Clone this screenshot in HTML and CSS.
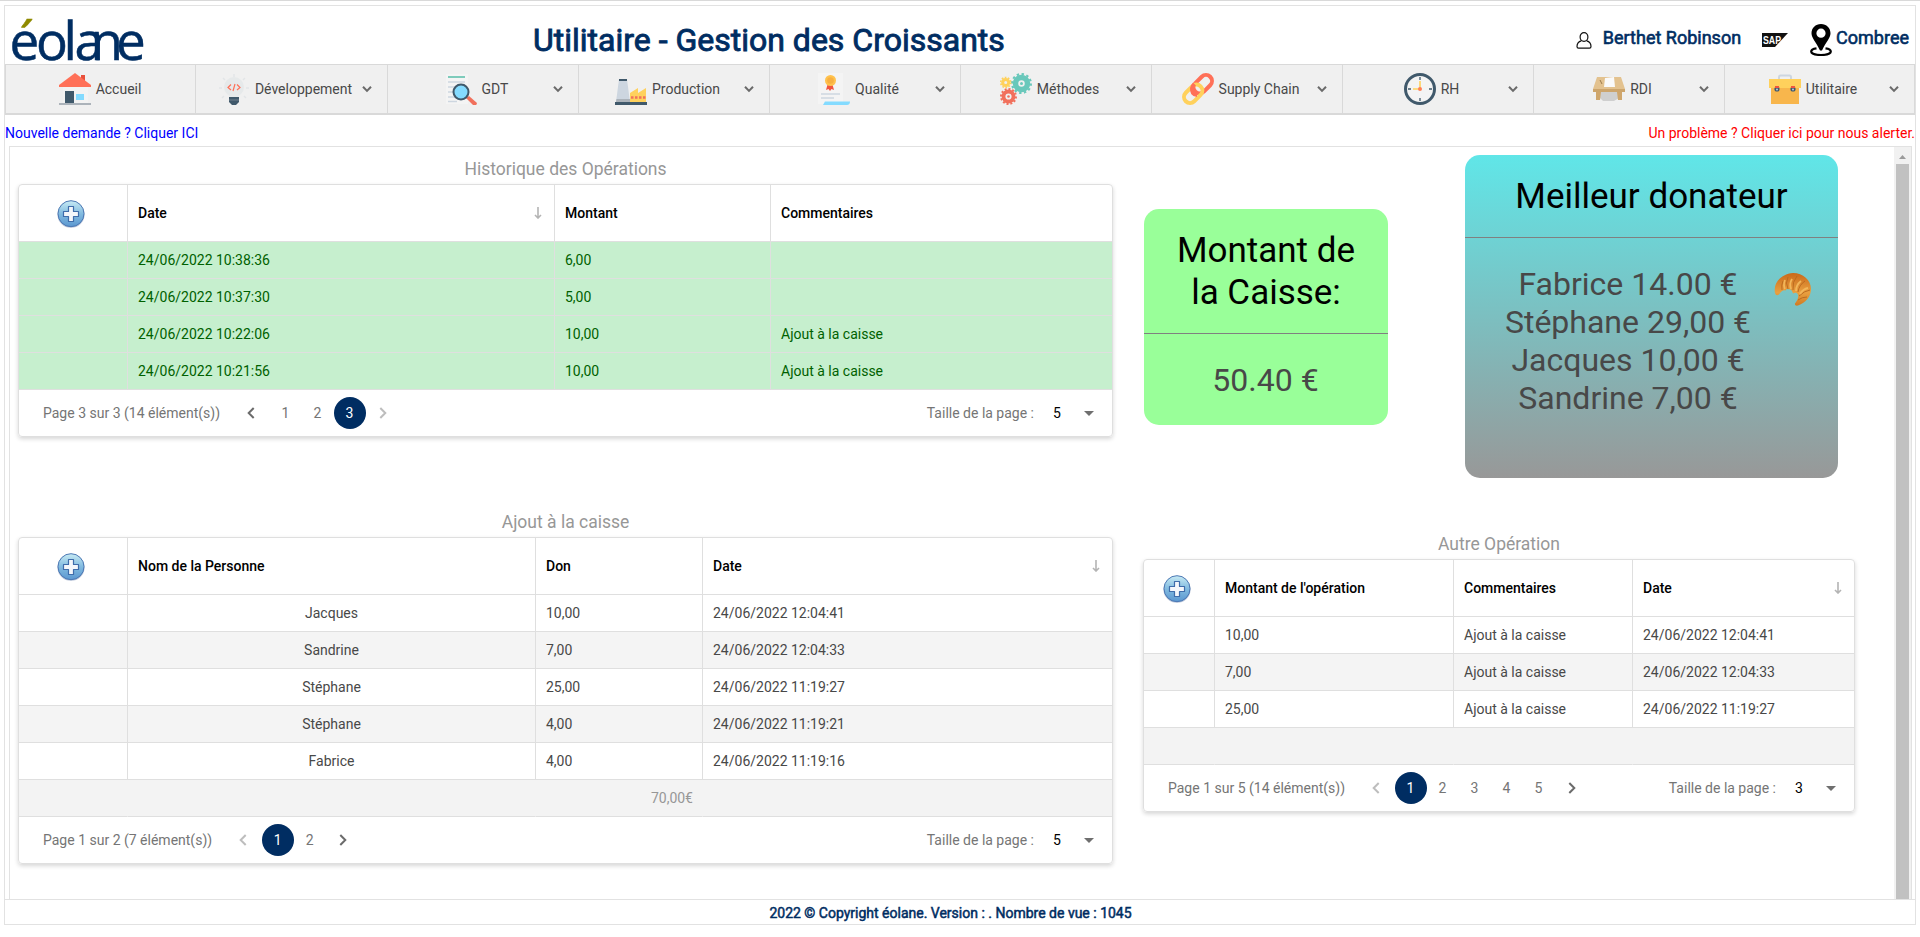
FILE: index.html
```html
<!DOCTYPE html>
<html lang="fr">
<head>
<meta charset="utf-8">
<title>Utilitaire - Gestion des Croissants</title>
<link rel="stylesheet" href="styles.css">
</head>
<body>
<svg width="0" height="0" class="defs">
  <defs>
    <linearGradient id="ball" x1="0" y1="0" x2="0" y2="1"><stop offset="0" stop-color="#c8ebf4"/><stop offset=".5" stop-color="#82bbe0"/><stop offset="1" stop-color="#5b97d0"/></linearGradient>
    <pattern id="brand" patternUnits="userSpaceOnUse" x="-4" y="-10" width="160" height="70"><path d="M0 0h160v70H0z" fill="#002d62"/><path d="M0 0h32v23H0z" fill="#8f8a00"/></pattern>
    <linearGradient id="crust" x1="0" y1="0" x2="0" y2="1"><stop offset="0" stop-color="#c9691a"/><stop offset=".6" stop-color="#e9a040"/><stop offset="1" stop-color="#d07a22"/></linearGradient>
    <symbol id="add" viewBox="0 0 28 28">
      <ellipse cx="14" cy="14.6" rx="13.6" ry="13.2" fill="#b9c4d8"/>
      <circle cx="14" cy="13.7" r="13" fill="url(#ball)" stroke="#4c78b4" stroke-width="1"/>
      <path d="M11.5 6.5h5v5h5v5h-5v5h-5v-5h-5v-5h5z" fill="#f4f7fb" stroke="#3f6dab" stroke-width="1.2" stroke-linejoin="round"/>
    </symbol>
    <symbol id="down" viewBox="0 0 10 8"><path d="M1 1.7 5 5.9 9 1.7" fill="none" stroke="#6a6a6a" stroke-width="2"/></symbol>
    <symbol id="sort" viewBox="0 0 8 12"><path d="M4 0V10M1 8l3 3 3-3" fill="none" stroke="#b4b4b4" stroke-width="1.6"/></symbol>
    <symbol id="prev" viewBox="0 0 8 12"><path d="M6.7 1 1.7 6l5 5" fill="none" stroke="currentColor" stroke-width="2"/></symbol>
    <symbol id="next" viewBox="0 0 8 12"><path d="M1.3 1l5 5-5 5" fill="none" stroke="currentColor" stroke-width="2"/></symbol>
    <symbol id="caret" viewBox="0 0 10 5"><path d="M0 0h10L5 5z" fill="#6f6f6f"/></symbol>
  </defs>
</svg>
<div class="page">
  <header class="top">
    <svg class="logo" width="140" height="48" viewBox="0 0 140 48"><text x="-2.600 24 51.500 62.500 78.500 104" y="45">éolane</text></svg>
    <h1 class="title">Utilitaire - Gestion des Croissants</h1>
    <div class="user">
      <svg class="i-user" width="16" height="17" viewBox="0 0 16 17" fill="none" stroke="#111" stroke-width="1.2"><ellipse cx="8" cy="5" rx="3.9" ry="4.4"/><path d="M5.3 8.8C2.5 9.500 1 11.500 1 14.500c0 1.200.5 1.700 1.500 1.700h11c1 0 1.500-.5 1.500-1.700 0-3-1.500-5-4.300-5.700"/></svg>
      <span class="user-name">Berthet Robinson</span>
      <svg class="i-sap" width="26" height="14" viewBox="0 0 26 14"><path d="M0 0h26L13 14H0z" fill="#111"/><text x="1" y="11" textLength="18" lengthAdjust="spacingAndGlyphs">SAP</text></svg>
      <svg class="i-pin" width="22" height="32" viewBox="0 0 22 32"><path d="M11 0C5.500 0 1.500 4 1.500 9.300 1.500 14 6 18 10 26.500h2C16 18 20.500 14 20.500 9.300 20.500 4 16.500 0 11 0zm0 4.600a4.600 4.600 0 1 1 0 9.200 4.600 4.600 0 0 1 0-9.200z" fill-rule="evenodd"/><path d="M6.500 24.300C3 24.800 1.200 26 1.200 27.500 1.200 29.500 5.500 31 11 31s9.800-1.500 9.800-3.500c0-1.500-1.800-2.700-5.300-3.200" fill="none" stroke="#000" stroke-width="2.200"/></svg>
      <span class="site">Combree</span>
    </div>
  </header>

  <nav class="menu">
    <a class="item home"><span class="entry"><svg width="32" height="32" viewBox="0 0 32 32"><path d="M4 12h25v18H4z" fill="#f3f3f3"/><path d="M22 2h4v8h-4z" fill="#e8503c"/><path d="M16 0 32 12v2H0v-2z" fill="#ff7058"/><path d="M6 18h9v12H6z" fill="#40596b"/><path d="M17 21h8v6h-8z" fill="#84dbff"/><path d="M0 30h32v2H0z" fill="#acb3ba"/></svg>Accueil</span></a>
    <a class="item"><span class="entry"><svg width="32" height="32" viewBox="0 0 32 32"><path d="M16 1v3M5 5l2 2M27 5l-2 2M1 15h3M31 15h-3M4 25l2-2M28 25l-2-2" stroke="#e2e5e7" stroke-width="1.500"/><circle cx="16" cy="14" r="10" fill="#e6e9ea"/><path d="M11.500 20h9v5h-9z" fill="#e6e9ea"/><path d="M13 11.500 10 14.500l3 2.500M19 11.500l3 3-3 2.500M17 11l-2 7" fill="none" stroke="#ff7058" stroke-width="1.200"/><path d="M11 24h10v5l-3 3h-4l-3-3z" fill="#40596b"/><path d="M11 27h10" stroke="#7d8b98" stroke-width=".8"/></svg>Développement</span><svg class="down"><use href="#down"/></svg></a>
    <a class="item"><span class="entry"><svg width="32" height="32" viewBox="0 0 32 32"><path d="M1 1h22v30H1z" fill="#f4f4f4"/><path d="M3 4h17" stroke="#7ecbbb" stroke-width="2"/><path d="M3 9h17M3 14h12M3 19h6M3 24h8M3 28.500h9" stroke="#cdd6e0" stroke-width="1.600"/><path d="m21 25 3-2 8 7q-1 4-4 2z" fill="#f1705c"/><circle cx="16" cy="19" r="7.500" fill="#84dbff" stroke="#40596b" stroke-width="2"/></svg>GDT</span><svg class="down"><use href="#down"/></svg></a>
    <a class="item"><span class="entry"><svg width="32" height="32" viewBox="0 0 32 32"><path d="M4 6h8l3 23H1z" fill="#cdd6e0"/><path d="M4 6h8v2H4z" fill="#40596b"/><path d="M1.500 26H15v3H1z" fill="#acb3ba"/><path d="M15 20l8-5v5l8-5v14H15z" fill="#ffd15c"/><path d="M16 24.500h15" stroke="#f1705c" stroke-width="2.500" stroke-dasharray="2.500 1.500"/><path d="M0 29h32v3H0z" fill="#40596b"/></svg>Production</span><svg class="down"><use href="#down"/></svg></a>
    <a class="item"><span class="entry"><svg width="32" height="32" viewBox="0 0 32 32"><path d="M0 0h25v31H0z" fill="#f4f4f4"/><path d="m10 10-2 7 2.500-1 1.500 2 1.500-2 2.500 1-2-7z" fill="#f1553f"/><circle cx="12.500" cy="7.500" r="5.500" fill="#ffc24d"/><circle cx="12.500" cy="7.500" r="3.300" fill="#f8b040"/><path d="M3 21h19M3 25h13" stroke="#cdd6e0" stroke-width="1.700"/><path d="M7 28.500h25c0 2-1 3.500-3 3.500H5z" fill="#84dbff"/></svg>Qualité</span><svg class="down"><use href="#down"/></svg></a>
    <a class="item"><span class="entry"><svg width="32" height="32" viewBox="0 0 32 32" fill="none"><circle cx="21.500" cy="10.500" r="6" stroke="#69c8bb" stroke-width="5.500"/><circle cx="21.500" cy="10.500" r="9.400" stroke="#69c8bb" stroke-width="2.200" stroke-dasharray="2.400 2.500"/><circle cx="21.500" cy="10.500" r="1.500" fill="#69c8bb"/><circle cx="8.500" cy="23.500" r="5" stroke="#f1705c" stroke-width="3.800"/><circle cx="8.500" cy="23.500" r="7.500" stroke="#f1705c" stroke-width="2" stroke-dasharray="2 1.900"/><circle cx="8.500" cy="23.500" r="1.300" fill="#f1705c"/><circle cx="5.700" cy="9.500" r="3" stroke="#ffd15c" stroke-width="3"/><circle cx="5.700" cy="9.500" r="5" stroke="#ffd15c" stroke-width="1.600" stroke-dasharray="1.700 1.440"/></svg>Méthodes</span><svg class="down"><use href="#down"/></svg></a>
    <a class="item"><span class="entry"><svg width="32" height="32" viewBox="0 0 32 32" fill="none" stroke-width="4"><rect x="-10.500" y="-6" width="21" height="12" rx="6" transform="translate(20.800 11.200) rotate(-45)" stroke="#ff7058"/><rect x="-10.500" y="-6" width="21" height="12" rx="6" transform="translate(11.200 20.800) rotate(-45)" stroke="#ffd15c"/><path d="M12.500 11q-4 4-1.500 9 1.500 2 4 2" stroke="#ff7058"/></svg>Supply Chain</span><svg class="down"><use href="#down"/></svg></a>
    <a class="item"><span class="entry"><svg width="32" height="32" viewBox="0 0 32 32"><circle cx="16" cy="16" r="14.500" fill="#f4f4f4" stroke="#40596b" stroke-width="3"/><path d="M16 4v3M16 25v3M4 16h3M25 16h3" stroke="#40596b" stroke-width="1.300"/><path d="M16 8v8H9" fill="none" stroke="#ffd15c" stroke-width="1.600"/><circle cx="16" cy="16" r="2" fill="#ff8058"/></svg>RH</span><svg class="down"><use href="#down"/></svg></a>
    <a class="item"><span class="entry"><svg width="32" height="32" viewBox="0 0 32 32"><path d="M7 17h19v8l-5 3H10l-4-4z" fill="#cfcfcf"/><path d="M4 4h24l4 12H0z" fill="#e3c28f"/><path d="M0 16h32v3H0z" fill="#cda56c"/><path d="M3 19h5L7 27H3zM24 19h5v8h-4z" fill="#cfa66c"/><path d="m12 5 9-1 1 10h-11z" fill="#fafafa"/><path d="m7 7 2 4" stroke="#9d7c4b"/></svg>RDI</span><svg class="down"><use href="#down"/></svg></a>
    <a class="item"><span class="entry"><svg width="32" height="32" viewBox="0 0 32 32"><path d="M10 6V4q0-1.500 1.500-1.500h9Q22 2.500 22 4v2" fill="none" stroke="#cdd6e0" stroke-width="2"/><path d="M2 15h28v16H2z" fill="#f8b64c"/><path d="M0 6h32v9H0z" fill="#ffd15c"/><circle cx="8" cy="16" r="2.600" fill="#40596b"/><circle cx="24" cy="16" r="2.600" fill="#40596b"/><path d="M6 13h4v2H6zM22 13h4v2h-4z" fill="#f1553f"/><circle cx="8" cy="16.500" r=".9" fill="#cdd6e0"/><circle cx="24" cy="16.500" r=".9" fill="#cdd6e0"/></svg>Utilitaire</span><svg class="down"><use href="#down"/></svg></a>
  </nav>

  <div class="links"><a class="ask">Nouvelle demande ? Cliquer ICI</a><a class="alert">Un problème ? Cliquer ici pour nous alerter.</a></div>

  <main class="frame">
    <div class="content">
      <section class="left">
        <h2 class="caption">Historique des Opérations</h2>
        <div class="grid history">
          <table>
            <colgroup><col class="w109"><col class="w427"><col class="w216"><col></colgroup>
            <thead><tr><th class="cmd"><svg class="add"><use href="#add"/></svg></th><th><div class="head">Date<svg class="sort"><use href="#sort"/></svg></div></th><th>Montant</th><th>Commentaires</th></tr></thead>
            <tbody>
              <tr><td></td><td>24/06/2022 10:38:36</td><td>6,00</td><td></td></tr>
              <tr><td></td><td>24/06/2022 10:37:30</td><td>5,00</td><td></td></tr>
              <tr><td></td><td>24/06/2022 10:22:06</td><td>10,00</td><td>Ajout à la caisse</td></tr>
              <tr><td></td><td>24/06/2022 10:21:56</td><td>10,00</td><td>Ajout à la caisse</td></tr>
            </tbody>
          </table>
          <div class="pager"><span class="info">Page 3 sur 3 (14 élément(s))</span><svg class="arrow"><use href="#prev"/></svg><span class="num">1</span><span class="num">2</span><span class="num on">3</span><svg class="arrow off"><use href="#next"/></svg><span class="size">Taille de la page :</span><span class="value">5</span><svg class="caret"><use href="#caret"/></svg></div>
        </div>
        <h2 class="caption second">Ajout à la caisse</h2>
        <div class="grid">
          <table>
            <colgroup><col class="w109"><col class="w408"><col class="w167"><col></colgroup>
            <thead><tr><th class="cmd"><svg class="add"><use href="#add"/></svg></th><th>Nom de la Personne</th><th>Don</th><th><div class="head">Date<svg class="sort"><use href="#sort"/></svg></div></th></tr></thead>
            <tbody>
              <tr><td></td><td class="mid">Jacques</td><td>10,00</td><td>24/06/2022 12:04:41</td></tr>
              <tr><td></td><td class="mid">Sandrine</td><td>7,00</td><td>24/06/2022 12:04:33</td></tr>
              <tr><td></td><td class="mid">Stéphane</td><td>25,00</td><td>24/06/2022 11:19:27</td></tr>
              <tr><td></td><td class="mid">Stéphane</td><td>4,00</td><td>24/06/2022 11:19:21</td></tr>
              <tr><td></td><td class="mid">Fabrice</td><td>4,00</td><td>24/06/2022 11:19:16</td></tr>
            </tbody>
            <tfoot><tr><td></td><td></td><td class="sum">70,00€</td><td></td></tr></tfoot>
          </table>
          <div class="pager"><span class="info">Page 1 sur 2 (7 élément(s))</span><svg class="arrow off"><use href="#prev"/></svg><span class="num on">1</span><span class="num">2</span><svg class="arrow"><use href="#next"/></svg><span class="size">Taille de la page :</span><span class="value">5</span><svg class="caret"><use href="#caret"/></svg></div>
        </div>
      </section>

      <section class="right">
        <div class="cards">
          <div class="card cash"><h3>Montant de<br>la Caisse:</h3><p>50.40 €</p></div>
          <div class="card best">
            <h3>Meilleur donateur</h3>
            <div class="donors">
              <p>Fabrice 14.00 €<br>Stéphane 29,00 €<br>Jacques 10,00 €<br>Sandrine 7,00 €</p>
              <svg class="croissant" width="37" height="33" viewBox="0 0 37 33"><path d="M1 20C-1 10 7 1 19 0c10 0 18 7 18 16 0 7-5 14-13 16.500-2 .5-3.500-.5-3-2 2-3 4-6 3-9-1-2-3-2-5-1-1-4-3-5-5-4-1-1-2 0-2 1-3-1-5 1-7 4q-3 2-4-1.500z" fill="url(#crust)"/><path d="M8 17Q7 12 9 8M14 16q-3-6 0-12M19 17q-1-8 4-14M24 19q1-7 7-11M25 23q5-5 11-6M24 27q4-3 9-3" fill="none" stroke="#b8681e" stroke-width=".9"/><path d="M11 16q-2-4 0-9M17 16q-2-5 1-10M22 18q0-6 5-10M26 21q3-5 8-6" fill="none" stroke="#f2b65a" stroke-width="1.800"/></svg>
            </div>
          </div>
        </div>
        <h2 class="caption third">Autre Opération</h2>
        <div class="grid">
          <table>
            <colgroup><col class="w71"><col class="w239"><col class="w179"><col></colgroup>
            <thead><tr><th class="cmd"><svg class="add"><use href="#add"/></svg></th><th>Montant de l'opération</th><th>Commentaires</th><th><div class="head">Date<svg class="sort"><use href="#sort"/></svg></div></th></tr></thead>
            <tbody>
              <tr><td></td><td>10,00</td><td>Ajout à la caisse</td><td>24/06/2022 12:04:41</td></tr>
              <tr><td></td><td>7,00</td><td>Ajout à la caisse</td><td>24/06/2022 12:04:33</td></tr>
              <tr><td></td><td>25,00</td><td>Ajout à la caisse</td><td>24/06/2022 11:19:27</td></tr>
            </tbody>
            <tfoot><tr><td></td><td></td><td></td><td></td></tr></tfoot>
          </table>
          <div class="pager"><span class="info">Page 1 sur 5 (14 élément(s))</span><svg class="arrow off"><use href="#prev"/></svg><span class="num on">1</span><span class="num">2</span><span class="num">3</span><span class="num">4</span><span class="num">5</span><svg class="arrow"><use href="#next"/></svg><span class="size">Taille de la page :</span><span class="value">3</span><svg class="caret"><use href="#caret"/></svg></div>
        </div>
      </section>
    </div>
    <div class="scroll"><svg width="7" height="4" viewBox="0 0 7 4"><path d="M3.500 0 7 4H0z" fill="#9b9b9b"/></svg><div class="thumb"></div></div>
  </main>
  <footer class="foot">2022 © Copyright éolane. Version : . Nombre de vue : 1045</footer>
</div>
</body>
</html>
```
FILE: styles.css
```css
* { box-sizing: border-box; }
body {
  margin: 0;
  height: 937px;
  overflow: hidden;
  border-top: 1px solid #d9d9d9;
  background: #fff;
  color: #484848;
  font: 14px/20px Roboto, sans-serif;
}
h1, h2, h3, p { margin: 0; font-weight: 400; }
svg { flex: none; display: block; }
.defs { position: absolute; }
.page {
  display: flex;
  flex-direction: column;
  width: 1912px;
  height: 920px;
  margin: 4px 0 0 4px;
  border: 1px solid #e2e2e2;
}

.top { display: flex; height: 58px; }
.logo { margin: 9px 0 0 7px; overflow: visible; }
.logo text { font: 53px "Open Sans", sans-serif; fill: url(#brand); stroke: url(#brand); stroke-width: .5px; }
.title {
  margin: 14px 0 0 381px;
  font-size: 32px;
  line-height: 40px;
  color: #002d62;
  -webkit-text-stroke: .9px #002d62;
  white-space: nowrap;
}
.user {
  display: flex;
  margin-left: auto;
  padding: 17px 6px 0 0;
  font-size: 18px;
  line-height: 30px;
  color: #002d62;
  -webkit-text-stroke: .6px #002d62;
}
.i-user { margin: 9px 11px 0 0; }
.i-sap { margin: 10px 22px 0 21px; }
.i-sap text { font: bold 10px "Liberation Sans", sans-serif; fill: #fff; -webkit-text-stroke: 0; }
.i-pin { margin: 1px 4px 0 0; }

.menu {
  display: grid;
  grid-template-columns: 190px 192px repeat(6, 191px) 191px 1fr;
  height: 51px;
  border: 1px solid #d9d9d9;
  border-bottom-width: 2px;
  background: #f0f0f0;
}
.item { display: flex; align-items: center; padding: 0 15px 1px 12px; border-right: 1px solid #d9d9d9; }
.item:last-child { border-right: 0; }
.item.home { padding: 0 1px 1px 0; }
.entry { flex: 1; display: flex; justify-content: center; align-items: center; gap: 5px; white-space: nowrap; }
.down { width: 10px; height: 8px; }

.links { display: flex; justify-content: space-between; padding-top: 8px; height: 31px; line-height: 20px; }
.ask { color: #00f; }
.alert { color: #f00; }

.frame { display: flex; flex: 1; margin: 0 3px 0 4px; border: 1px solid #e2e2e2; border-bottom: 0; }
.content { flex: 1; display: flex; gap: 30px; padding-left: 8px; }
.scroll { width: 17px; padding: 8px 2px 0; background: #f1f1f1; display: flex; flex-direction: column; align-items: center; gap: 5px; }
.thumb { flex: 1; width: 13px; background: #c1c1c1; }
.left { width: 1095px; }
.right { width: 712px; }

.caption { height: 37px; padding-top: 12px; font-size: 17.5px; line-height: 20px; text-align: center; color: #979797; }
.caption.second { height: 100px; padding-top: 75px; }
.caption.third { height: 81px; padding-top: 56px; }

.grid { border: 1px solid #dfdfdf; border-radius: 4px; box-shadow: 0 2px 4px rgba(0, 0, 0, .16); }
table { width: 100%; table-layout: fixed; border-collapse: separate; border-spacing: 0; }
th, td { height: 37px; padding: 0 10px; border-right: 1px solid #dfdfdf; border-bottom: 1px solid #dfdfdf; text-align: left; white-space: nowrap; }
th { height: 57px; font-weight: 500; color: #000; }
th:last-child, td:last-child { border-right: 0; }
tbody tr:nth-child(even) { background: #f4f4f4; }
tfoot { background: #f3f3f3; color: #979797; }
tfoot td { border-right-color: transparent; }
.history tbody tr { background: #c6efce; color: #006100; }
.cmd { padding: 0 4px 0 0; }
.add { width: 28px; height: 28px; margin: 2px auto 0; }
.head { display: flex; justify-content: space-between; align-items: center; }
.sort { width: 8px; height: 12px; margin-right: 2px; }
.mid { text-align: center; }
.sum { text-align: right; padding-right: 9px; }
.w109 { width: 109px; }
.w427 { width: 427px; }
.w216 { width: 216px; }
.w408 { width: 408px; }
.w167 { width: 167px; }
.w71 { width: 71px; }
.w239 { width: 239px; }
.w179 { width: 179px; }

.pager { display: flex; align-items: center; height: 46px; padding: 0 18px 0 24px; color: #757575; }
.info { margin-right: 27px; }
.arrow { width: 8px; height: 12px; margin-right: 14.5px; color: #6b6b6b; }
.arrow.off { color: #bdbdbd; }
.num { width: 32px; height: 32px; line-height: 32px; border-radius: 50%; text-align: center; }
.num + .arrow { margin-left: 13px; }
.num.on { background: #002d62; color: #fff; }
.size { margin-left: auto; }
.value { width: 9px; margin: 0 22px 0 19px; color: #000; }
.caret { width: 10px; height: 5px; }

.cards { display: flex; align-items: flex-start; justify-content: space-between; height: 331px; padding: 8px 17px 0 1px; }
.card { border-radius: 15px; text-align: center; font-size: 32px; line-height: 38px; }
.card h3 { border-bottom: 1px solid #808080; font-size: 35px; line-height: 42px; color: #000; white-space: nowrap; }
.cash { width: 244px; height: 216px; margin-top: 54px; background: #9f9; }
.cash h3 { height: 125px; padding-top: 21px; }
.cash p { padding: 27px 1px 0 0; }
.best { width: 373px; height: 323px; background: linear-gradient(#60e6e8, #989898); }
.best h3 { height: 83px; padding-top: 21px; }
.donors { display: flex; padding: 27px 27px 0 0; }
.donors p { flex: 1; padding-left: 17px; }
.croissant { margin-top: 8px; }

.foot { height: 25px; border-top: 1px solid #e2e2e2; padding-right: 19px; text-align: center; line-height: 26px; color: #002d62; -webkit-text-stroke: .5px #002d62; }
```
